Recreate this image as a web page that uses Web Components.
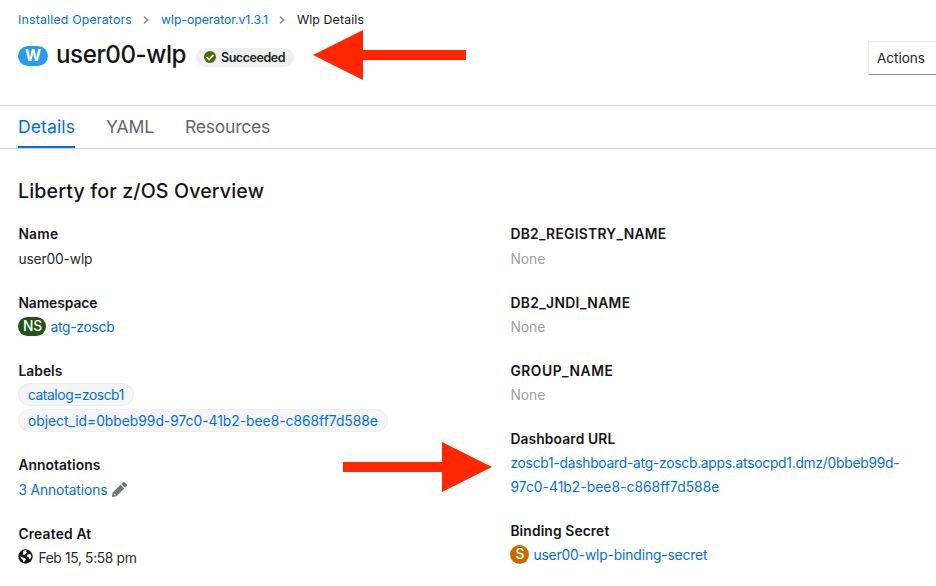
<!DOCTYPE html>
<html lang="en"><head><meta charset="utf-8"><title>user00-wlp · Details</title>
<style>html,body{margin:0;background:#fff;overflow:hidden}body{width:936px;height:586px}</style></head>
<body>
<wlp-page></wlp-page>
<script>
const define = (name, html, ready) => {
  const t = document.createElement('template');
  t.innerHTML = html;
  customElements.define(name, class extends HTMLElement {
    connectedCallback() {
      if (this.shadowRoot) return;
      this.attachShadow({ mode: 'open' }).append(t.content.cloneNode(true));
      if (ready) ready(this, this.shadowRoot);
    }
  });
};

// A run of text tracked to a given width (w, in px).
define('ui-text', `<style>
:host{display:inline-block;white-space:nowrap;font-kerning:normal}
span{display:inline-block}
</style><span><slot></slot></span>`, (el, root) => {
  const w = +el.getAttribute('w'), n = el.textContent.length;
  const s = root.querySelector('span');
  el.style.width = w + 'px';
  s.style.letterSpacing = ((w - s.getBoundingClientRect().width) / n).toFixed(3) + 'px';
});

define('ui-link', `<style>:host{display:inline-block;color:#006fe0}a{color:inherit;text-decoration:none;cursor:pointer}</style><a><slot></slot></a>`);

define('resource-badge', `<style>
:host{display:inline-flex;align-items:center;justify-content:center;box-sizing:border-box;flex:none;
width:var(--w);height:var(--h,19px);border-radius:20px;background:var(--bg);color:#fff;line-height:1;font-weight:500;margin-top:-1px}
</style><slot></slot>`);

define('status-badge', `<style>
:host{display:flex;align-items:center;box-sizing:border-box;width:98px;height:19px;border-radius:10px;background:#efefef;padding-left:8px;gap:5px;font-size:12.5px;font-weight:600;line-height:19px;color:#222}
svg{display:block;flex:none}
</style><svg width="12" height="12" viewBox="0 0 12 12"><circle cx="6" cy="6" r="6" fill="#486b00"/><path d="M2.7 6.2 5.1 8.5 9.4 4.1" fill="none" stroke="#fff" stroke-width="1.6"/></svg><slot></slot>`);

define('crumb-sep', `<style>:host{display:block;width:6px;height:10px}svg{display:block}</style>
<svg width="6" height="10" viewBox="0 0 6 10"><path d="M1 1.6 4.6 5 1 8.4" fill="none" stroke="#8a8d90" stroke-width="1.6"/></svg>`);

define('page-header', `<style>
:host{display:block;box-sizing:border-box;height:106px;border-bottom:1px solid #d6d6d6;padding-left:18px}
nav{display:flex;align-items:center;height:20px;padding-top:10px;font-size:12.3px;line-height:20px}
crumb-sep{margin:0 12px 0 11px}
.row{display:flex;align-items:flex-start}
.title{display:flex;align-items:center;height:32px;margin-top:9px}
h1{margin:4px 10px 0 8px;font-size:24.2px;font-weight:500;line-height:32px;height:36px;color:#151515}
status-badge{margin-top:4px}
resource-badge{margin-top:2px;font-size:15.5px;font-weight:700}
button{margin:11px 0 0 auto;width:68px;height:34px;box-sizing:border-box;background:#fff;border:1px solid #ededed;border-right:0;border-bottom-color:#8a8d90;padding:0 0 0 8px;text-align:left;font:inherit;font-size:13.6px;color:#222}
</style>
<nav><ui-link><ui-text w="114">Installed Operators</ui-text></ui-link><crumb-sep></crumb-sep><ui-link><ui-text w="107">wlp-operator.v1.3.1</ui-text></ui-link><crumb-sep></crumb-sep><ui-text w="67">Wlp Details</ui-text></nav>
<div class="row"><div class="title"><resource-badge style="--w:30px;--h:20px;--bg:#2b9af3">W</resource-badge><h1><ui-text w="130">user00-wlp</ui-text></h1><status-badge><ui-text w="64">Succeeded</ui-text></status-badge></div>
<button><ui-text w="48">Actions</ui-text></button></div>`);

define('ui-tab', `<style>
:host{display:block;box-sizing:border-box;height:42px;padding-top:9px;font-size:17.6px;line-height:24px;color:#62666c}
:host([active]){color:#006fe0;box-shadow:inset 0 -2px #006fe0}
</style><slot></slot>`);

define('ui-tabs', `<style>:host{display:flex;box-sizing:border-box;height:43px;gap:31px;padding-left:18px;border-bottom:1px solid #d2d2d2}</style><slot></slot>`);

define('detail-field', `<style>
:host{display:block;box-sizing:border-box;height:var(--fh,69px)}
dt{height:24px;font-weight:600;color:#151515}
dd{margin:var(--dg,1px) 0 0;display:flex;align-items:center;min-height:24px;color:var(--vc,#2b2b2b)}
</style><dt><slot name="label"></slot></dt><dd><slot></slot></dd>`);

define('label-chip', `<style>
:host{display:flex;align-items:center;box-sizing:border-box;height:23px;width:max-content;padding:0 9px 0 8.5px;border:1px solid #ededed;border-radius:12px;background:#f5f5f5;color:#006fe0;line-height:22px}
</style><slot></slot>`);
define('chip-list', `<style>:host{display:flex;flex-direction:column;gap:3px}</style><slot></slot>`);

define('pencil-icon', `<style>:host{display:block;margin:-2px 0 0 5px}svg{display:block}</style>
<svg width="15" height="15" viewBox="0 0 512 512"><path fill="#72767b" d="M498 142l-46 46c-5 5-12 5-17 0L324 77c-5-5-5-12 0-17l46-46c19-19 49-19 68 0l60 60c19 19 19 49 0 68zm-214-42L22 362 0 484c-3 16 12 30 28 28l122-22 262-262c5-5 5-12 0-17L301 100c-4-5-12-5-17 0zM88 424h48v20l-42 10-26-26 10-42h10v38z"/></svg>`);

define('globe-icon', `<style>:host{display:block;margin:-4px 5px 0 0}svg{display:block}</style>
<svg width="15" height="15" viewBox="0 0 15 15"><circle cx="7.5" cy="7.5" r="7.2" fill="#151515"/><path fill="#fff" d="M5.4 1.7 7.6 1.3 8.9 1.7 8 2.8 9.2 3.5 7.4 4.9 6.3 5.9 4.6 5.4 5.2 3.5ZM9.7 5.5 11.8 4.9 13.3 6.1 13.2 8 12.3 9.9 11.3 10.3 10.9 8.6 9.5 8.1 8.8 6.8ZM2 7.1 4 8.2 6.6 8.9 8 10.2 6.9 11.8 6.1 13.3 5 12.9 4.9 10.9 3.3 9.7Z"/></svg>`);

define('callout-arrow', `<style>
:host{display:block;position:absolute;width:var(--aw);height:50px;pointer-events:none}
:host([left]) svg{transform:scaleX(-1)}svg{display:block;overflow:visible}
</style><svg height="50"><path fill="#ff2600"/></svg>`, (el, root) => {
  const w = +el.getAttribute('length');
  el.style.setProperty('--aw', w + 'px');
  root.querySelector('svg').setAttribute('width', w);
  root.querySelector('path').setAttribute('d', `M0 20H${w - 50}V0L${w} 25 ${w - 50} 50V30H0Z`);
});

define('wlp-page', `<style>
:host{display:block;position:relative;width:936px;height:586px;overflow:hidden;font:400 13.8px/24px Inter,"Noto Sans",sans-serif;color:#151515}
h2{margin:27px 0 0 18px;font-size:19.6px;font-weight:500;line-height:31px;height:46px;color:#151515}
main{display:grid;grid-template-columns:492px 1fr;padding-left:18.4px}
.none{--vc:#a0a0a0}
</style>
<page-header></page-header>
<ui-tabs><ui-tab active><ui-text w="57">Details</ui-text></ui-tab><ui-tab><ui-text w="48">YAML</ui-text></ui-tab><ui-tab><ui-text w="85">Resources</ui-text></ui-tab></ui-tabs>
<h2><ui-text w="246">Liberty for z/OS Overview</ui-text></h2>
<main><section>
<detail-field><ui-text slot="label" w="40">Name</ui-text><ui-text w="74">user00-wlp</ui-text></detail-field>
<detail-field style="--fh:68px;--dg:0"><ui-text slot="label" w="79">Namespace</ui-text><resource-badge style="--w:28px;--bg:#1e5714;margin-right:4px"><ui-text w="19">NS</ui-text></resource-badge><ui-link><ui-text w="64">atg-zoscb</ui-text></ui-link></detail-field>
<detail-field style="--fh:94px;--dg:0"><ui-text slot="label" w="44">Labels</ui-text><chip-list><label-chip><ui-text w="96">catalog=zoscb1</ui-text></label-chip><label-chip><ui-text w="350">object_id=0bbeb99d-97c0-41b2-bee8-c868ff7d588e</ui-text></label-chip></chip-list></detail-field>
<detail-field><ui-text slot="label" w="82">Annotations</ui-text><ui-link><ui-text w="89">3 Annotations</ui-text></ui-link><pencil-icon></pencil-icon></detail-field>
<detail-field style="--fh:60px;--dg:0"><ui-text slot="label" w="73">Created At</ui-text><globe-icon></globe-icon><ui-text w="98">Feb 15, 5:58 pm</ui-text></detail-field>
</section><section>
<detail-field class="none"><ui-text slot="label" w="156">DB2_REGISTRY_NAME</ui-text><ui-text w="35">None</ui-text></detail-field>
<detail-field class="none" style="--fh:68px;--dg:0"><ui-text slot="label" w="120">DB2_JNDI_NAME</ui-text><ui-text w="35">None</ui-text></detail-field>
<detail-field class="none" style="--fh:68px;--dg:0"><ui-text slot="label" w="103">GROUP_NAME</ui-text><ui-text w="35">None</ui-text></detail-field>
<detail-field style="--fh:92px;--dg:0"><ui-text slot="label" w="105">Dashboard URL</ui-text><ui-link><ui-text w="389">zoscb1-dashboard-atg-zoscb.apps.atsocpd1.dmz/0bbeb99d-</ui-text><br><ui-text w="209">97c0-41b2-bee8-c868ff7d588e</ui-text></ui-link></detail-field>
<detail-field style="--fh:60px;--dg:0"><ui-text slot="label" w="99">Binding Secret</ui-text><resource-badge style="--w:19px;--bg:#cb6a00;margin-right:4px">S</resource-badge><ui-link><ui-text w="174">user00-wlp-binding-secret</ui-text></ui-link></detail-field>
</section></main>
<callout-arrow left length="153" style="left:313px;top:30px"></callout-arrow>
<callout-arrow length="149" style="left:343px;top:442px"></callout-arrow>`);
</script>
</body></html>
